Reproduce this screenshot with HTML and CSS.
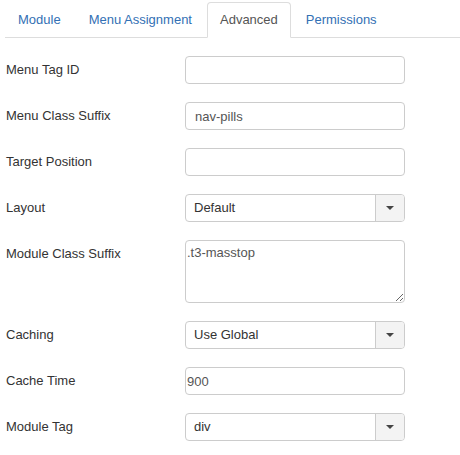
FILE: index.html
```html
<!DOCTYPE html>
<html>
<head>
<meta charset="utf-8">
<link rel="stylesheet" href="styles.css">
</head>
<body>
<div class="page">
  <ul class="tabs">
    <li class="tab"><a>Module</a></li>
    <li class="tab"><a>Menu Assignment</a></li>
    <li class="tab active"><a>Advanced</a></li>
    <li class="tab"><a>Permissions</a></li>
  </ul>
  <div class="form">
    <div class="row">
      <label class="label">Menu Tag ID</label>
      <input class="input" type="text" value="">
    </div>
    <div class="row">
      <label class="label">Menu Class Suffix</label>
      <input class="input wide-pad" type="text" value="nav-pills">
    </div>
    <div class="row">
      <label class="label">Target Position</label>
      <input class="input" type="text" value="">
    </div>
    <div class="row">
      <label class="label">Layout</label>
      <div class="select"><span class="select-text">Default</span><span class="select-btn"><i class="caret"></i></span></div>
    </div>
    <div class="row">
      <label class="label">Module Class Suffix</label>
      <textarea class="textarea">.t3-masstop</textarea>
    </div>
    <div class="row">
      <label class="label">Caching</label>
      <div class="select"><span class="select-text">Use Global</span><span class="select-btn"><i class="caret"></i></span></div>
    </div>
    <div class="row">
      <label class="label">Cache Time</label>
      <input class="input narrow-pad" type="text" value="900">
    </div>
    <div class="row">
      <label class="label">Module Tag</label>
      <div class="select"><span class="select-text">div</span><span class="select-btn"><i class="caret"></i></span></div>
    </div>
  </div>
</div>
</body>
</html>
```

FILE: styles.css
```css
html, body {
  margin: 0;
  padding: 0;
  background: #fff;
}
body {
  font-family: "Liberation Sans", Arial, sans-serif;
  font-size: 13px;
  line-height: 18px;
  color: #333;
}
.page {
  padding: 2px 0 0 5px;
}
.tabs {
  list-style: none;
  margin: 0;
  padding: 0;
  display: flex;
  border-bottom: 1px solid #ddd;
}
.tab {
  margin-right: 2px;
  margin-bottom: -1px;
}
.tab a {
  display: block;
  padding: 8px 12px;
  border: 1px solid transparent;
  border-radius: 4px 4px 0 0;
  color: #3370b4;
  line-height: 18px;
}
.tab.active a {
  color: #555;
  background: #fff;
  border-color: #ddd #ddd transparent #ddd;
}
.form {
  padding-top: 18px;
}
.row {
  display: flex;
  align-items: flex-start;
  margin-bottom: 18px;
}
.label {
  width: 180px;
  flex: none;
  padding-top: 5px;
  padding-left: 1px;
  box-sizing: border-box;
  color: #333;
}
.input, .textarea, .select {
  width: 220px;
  box-sizing: border-box;
  border: 1px solid #ccc;
  border-radius: 4px;
  font-family: "Liberation Sans", Arial, sans-serif;
  font-size: 13px;
  color: #555;
  background: #fff;
  margin: 0;
}
.input {
  height: 28px;
  padding: 4px 6px;
  line-height: 18px;
  outline: none;
}
.wide-pad {
  padding-left: 9px;
}
.narrow-pad {
  padding-left: 1px;
}
.textarea {
  height: 63px;
  padding: 3px 1px;
  line-height: 18px;
  resize: vertical;
  outline: none;
  display: block;
}
.select {
  height: 28px;
  display: flex;
  align-items: stretch;
  overflow: hidden;
}
.select-text {
  flex: 1;
  padding: 4px 8px;
  line-height: 18px;
  color: #333;
}
.select-btn {
  width: 28px;
  flex: none;
  border-left: 1px solid #ccc;
  background: #f3f3f3;
  display: flex;
  align-items: center;
  justify-content: center;
}
.caret {
  display: block;
  width: 0;
  height: 0;
  border-left: 4px solid transparent;
  border-right: 4px solid transparent;
  border-top: 4px solid #444;
}
```
